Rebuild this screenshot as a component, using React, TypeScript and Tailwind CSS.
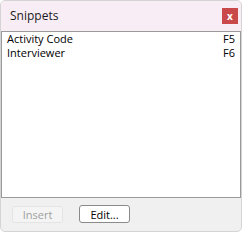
const rows = [
  { name: 'Activity Code', key: 'F5' },
  { name: 'Interviewer', key: 'F6' },
];

export default function App() {
  return (
    <div className="h-[232px] w-[242px] bg-white" style={{ fontFamily: '"Open Sans", "Noto Sans", sans-serif' }}>
      <div className="flex h-full w-full flex-col overflow-hidden rounded-[5px] border border-[#d4d4d4] bg-[#f0f0f0]">
        <div className="flex h-[30px] shrink-0 items-center justify-between bg-[#f8edf5] pl-[9px] pr-[3px]">
          <span className="text-[12px] text-[#1a1a1a]">Snippets</span>
          <button className="flex h-[16px] w-[16px] items-center justify-center bg-[#c9494b] text-[10px] font-bold leading-none text-white">
            x
          </button>
        </div>
        <div className="flex h-[167px] shrink-0 flex-col border border-[#9a9a9a] bg-white px-[5px]">
          {rows.map((r) => (
            <div key={r.key} className="flex h-[14px] items-center justify-between text-[11px] leading-[14px] text-black">
              <span>{r.name}</span>
              <span>{r.key}</span>
            </div>
          ))}
        </div>
        <div className="flex flex-1 items-center gap-[16px] pl-[11px] pb-[1px]">
          <button className="h-[17px] w-[51px] rounded-[3px] border border-[#e4e4e4] bg-[#f4f4f4] text-[11px] leading-none text-[#a0a0a0]">
            Insert
          </button>
          <button className="h-[18px] w-[51px] rounded-[3px] border border-[#8a8a8a] bg-white text-[11px] leading-none text-black">
            Edit...
          </button>
        </div>
      </div>
    </div>
  );
}
